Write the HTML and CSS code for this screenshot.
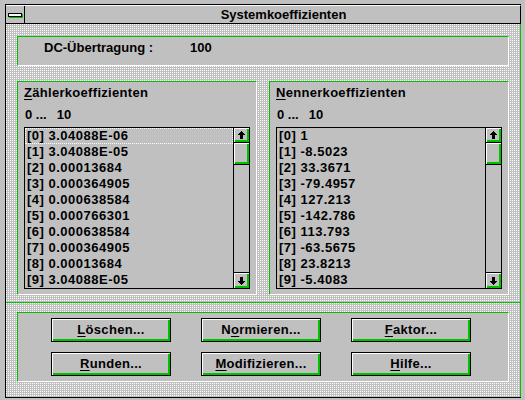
FILE: index.html
```html
<!DOCTYPE html>
<html>
<head>
<meta charset="utf-8">
<link rel="stylesheet" href="styles.css">
</head>
<body>
<div class="win">
  <div class="frame">
    <div class="titlebar">
      <div class="sysmenu"><span class="dash"></span></div>
      <div class="title">Systemkoeffizienten</div>
    </div>
    <div class="upper">
      <div class="dcpanel"><span class="dc-label">DC-Übertragung :</span><span class="dc-value">100</span></div>
      <div class="groups">
        <div class="group">
          <div class="gtitle"><u>Z</u>ählerkoeffizienten</div>
          <div class="range"><span>0 ...</span><span class="rmax">10</span></div>
          <div class="listbox">
            <ul class="items">
              <li class="focus">[0] 3.04088E-06</li>
              <li>[1] 3.04088E-05</li>
              <li>[2] 0.00013684</li>
              <li>[3] 0.000364905</li>
              <li>[4] 0.000638584</li>
              <li>[5] 0.000766301</li>
              <li>[6] 0.000638584</li>
              <li>[7] 0.000364905</li>
              <li>[8] 0.00013684</li>
              <li>[9] 3.04088E-05</li>
            </ul>
            <div class="sb">
              <div class="sbtn up"><svg width="7" height="8" viewBox="0 0 7 8"><polygon points="3.5,0 7,4 5,4 5,8 2,8 2,4 0,4" fill="#000" shape-rendering="crispEdges"/></svg></div>
              <div class="thumb"></div>
              <div class="track"></div>
              <div class="sbtn down"><svg width="7" height="8" viewBox="0 0 7 8"><polygon points="2,0 5,0 5,4 7,4 3.5,8 0,4 2,4" fill="#000" shape-rendering="crispEdges"/></svg></div>
            </div>
          </div>
        </div>
        <div class="group">
          <div class="gtitle"><u>N</u>ennerkoeffizienten</div>
          <div class="range"><span>0 ...</span><span class="rmax">10</span></div>
          <div class="listbox">
            <ul class="items">
              <li>[0] 1</li>
              <li>[1] -8.5023</li>
              <li>[2] 33.3671</li>
              <li>[3] -79.4957</li>
              <li>[4] 127.213</li>
              <li>[5] -142.786</li>
              <li>[6] 113.793</li>
              <li>[7] -63.5675</li>
              <li>[8] 23.8213</li>
              <li>[9] -5.4083</li>
            </ul>
            <div class="sb">
              <div class="sbtn up"><svg width="7" height="8" viewBox="0 0 7 8"><polygon points="3.5,0 7,4 5,4 5,8 2,8 2,4 0,4" fill="#000" shape-rendering="crispEdges"/></svg></div>
              <div class="thumb"></div>
              <div class="track"></div>
              <div class="sbtn down"><svg width="7" height="8" viewBox="0 0 7 8"><polygon points="2,0 5,0 5,4 7,4 3.5,8 0,4 2,4" fill="#000" shape-rendering="crispEdges"/></svg></div>
            </div>
          </div>
        </div>
      </div>
    </div>
    <div class="lower">
      <div class="btnpanel">
        <div class="btn"><u>L</u>öschen...</div>
        <div class="btn">N<u>o</u>rmieren...</div>
        <div class="btn"><u>F</u>aktor...</div>
        <div class="btn"><u>R</u>unden...</div>
        <div class="btn"><u>M</u>odifizieren...</div>
        <div class="btn"><u>H</u>ilfe...</div>
      </div>
    </div>
  </div>
</div>
</body>
</html>
```
FILE: styles.css
```css
* { box-sizing: border-box; }
html, body { margin: 0; padding: 0; background: #c0c0c0; }
body {
  font-family: "Liberation Sans", Arial, sans-serif;
  font-weight: bold;
  font-size: 13px;
  color: #000;
}
u { text-decoration: underline; text-underline-offset: 2px; text-decoration-thickness: 1px; }

.win {
  width: 525px;
  height: 400px;
  padding: 4px 0 2px 5px;
  background: #c0c0c0;
}
.frame {
  width: 516px;
  height: 394px;
  border: 1px solid #000;
  border-right: 0;
  display: flex;
  flex-direction: column;
}
.titlebar {
  height: 19px;
  border-bottom: 1px solid #000;
  border-right: 1px solid #000;
  border-top: 1px solid #fff;
  display: flex;
  background: #c0c0c0;
}
.sysmenu {
  width: 19px;
  border-right: 1px solid #000;
  display: flex;
  align-items: center;
  justify-content: center;
  padding-top: 1px;
}
.dash {
  width: 14px;
  height: 4px;
  border: 1px solid #000;
  background: #fff;
  box-shadow: 1px 1px 0 #00c000;
}
.title {
  flex: 1;
  text-align: center;
  line-height: 17px;
  padding-left: 22px;
}

.upper, .lower {
  background: conic-gradient(at 1px 1px, #c0c0c0 270deg, #fff 0) 0 0 / 2px 2px;
  border-right: 1px solid #00c000;
}
.upper {
  height: 279px;
  border-bottom: 1px solid #00c000;
  padding: 12px 11px 0 11px;
}
.dcpanel {
  height: 30px;
  background: #c0c0c0;
  border-top: 1px solid #00c000;
  border-left: 1px solid #00c000;
  border-bottom: 1px solid #fff;
  border-right: 1px solid #fff;
  padding: 3px 0 0 26px;
  line-height: 16px;
}
.dc-label { display: inline-block; width: 146px; }

.groups {
  margin-top: 15px;
  display: grid;
  grid-template-columns: 240px 240px;
  column-gap: 12px;
}
.group {
  height: 214px;
  background: #c0c0c0;
  border-top: 1px solid #00c000;
  border-left: 1px solid #00c000;
  border-bottom: 1px solid #fff;
  border-right: 1px solid #fff;
  padding: 3px 0 0 6px;
}
.gtitle { line-height: 16px; letter-spacing: 0.3px; }
.range { margin-top: 6px; line-height: 16px; padding-left: 1px; }
.rmax { margin-left: 10px; }

.listbox {
  margin-top: 4px;
  width: 226px;
  height: 162px;
  border: 1px solid #000;
  display: flex;
  background: #c0c0c0;
}
.items {
  list-style: none;
  margin: 0;
  padding: 0;
  flex: 1;
}
.items li {
  height: 16px;
  line-height: 16px;
  padding-left: 2px;
  letter-spacing: 0.5px;
  white-space: nowrap;
}
.items li.focus {
  outline: 1px dotted #fff;
  outline-offset: -1px;
}
.sb {
  width: 16px;
  border-left: 1px solid #000;
  display: flex;
  flex-direction: column;
}
.sbtn, .thumb {
  background: #c0c0c0;
  box-shadow: inset 1px 1px 0 #fff, inset -2px -2px 0 #00c000;
  display: flex;
  align-items: center;
  justify-content: center;
}
.sbtn.up { height: 15px; border-bottom: 1px solid #000; }
.thumb { height: 22px; border-bottom: 1px solid #000; }
.track { flex: 1; }
.sbtn.down { height: 16px; border-top: 1px solid #000; }
.sbtn svg { display: block; }

.lower {
  flex: 1;
  padding: 9px 11px 0 11px;
}
.btnpanel {
  height: 70px;
  background: #c0c0c0;
  border-top: 1px solid #00c000;
  border-left: 1px solid #00c000;
  border-bottom: 1px solid #fff;
  border-right: 1px solid #fff;
  padding: 5px 0 0 33px;
  display: grid;
  grid-template-columns: 120px 120px 120px;
  grid-auto-rows: 24px;
  column-gap: 30px;
  row-gap: 10px;
}
.btn {
  border: 1px solid #000;
  background: #c0c0c0;
  box-shadow: inset 1px 1px 0 #fff, inset -2px -2px 0 #00c000;
  display: flex;
  align-items: center;
  justify-content: center;
  padding-bottom: 1px;
  letter-spacing: 0.3px;
}
```
